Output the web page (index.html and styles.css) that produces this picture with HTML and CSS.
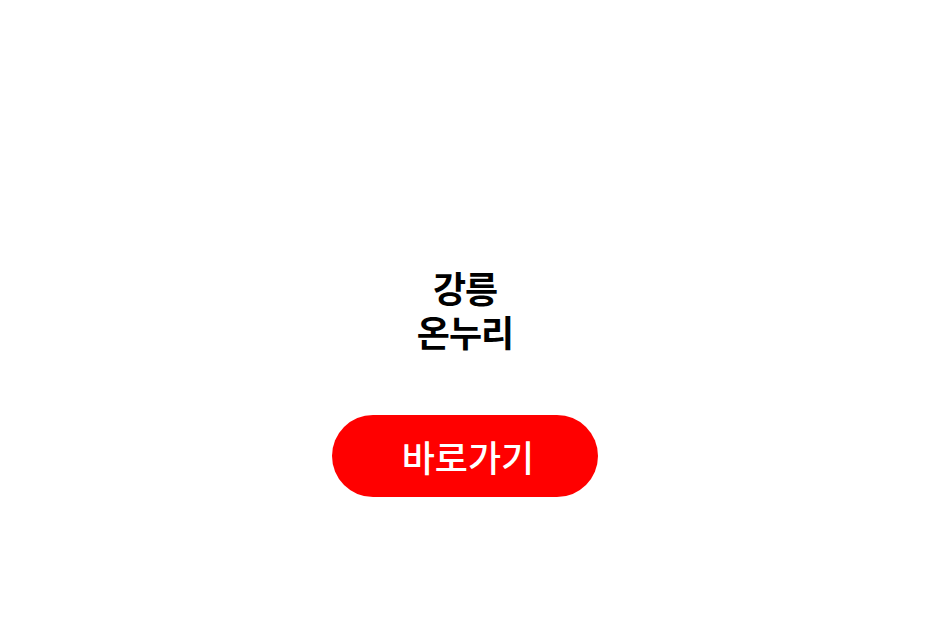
FILE: index.html
```html
<!DOCTYPE html>
<html lang="ko">
<head>
    <meta charset="UTF-8">
    <meta name="viewport" content="width=device-width, initial-scale=1.0">
    <title>강릉 온누리</title>
    <link rel="stylesheet" href="styles.css">
</head>
<body>
    <div id="pagina">
        <h1 class="titulo">
            <span class="linha">강릉</span>
            <span class="linha">온누리</span>
        </h1>
        <a class="botao" href="#">바로가기</a>
    </div>
</body>
</html>
```

FILE: styles.css
```css
body {
    margin: 0;
    background-color: #fff;
    font-family: "Noto Sans CJK KR", "Noto Sans", sans-serif;
}
#pagina {
    display: flex;
    flex-direction: column;
    align-items: center;
    padding-top: 265px;
}
.titulo {
    display: flex;
    flex-direction: column;
    align-items: center;
    margin: 0;
    font-size: 36px;
    line-height: 44px;
    font-weight: 700;
    color: #000;
    letter-spacing: -1px;
}
.linha {
    display: block;
}
.botao {
    display: flex;
    align-items: center;
    justify-content: center;
    margin-top: 62px;
    width: 266px;
    height: 82px;
    border-radius: 41px;
    background-color: #ff0000;
    color: #fff;
    font-size: 36px;
    font-weight: 500;
    text-decoration: none;
    padding-left: 6px;
    box-sizing: border-box;
}
```
